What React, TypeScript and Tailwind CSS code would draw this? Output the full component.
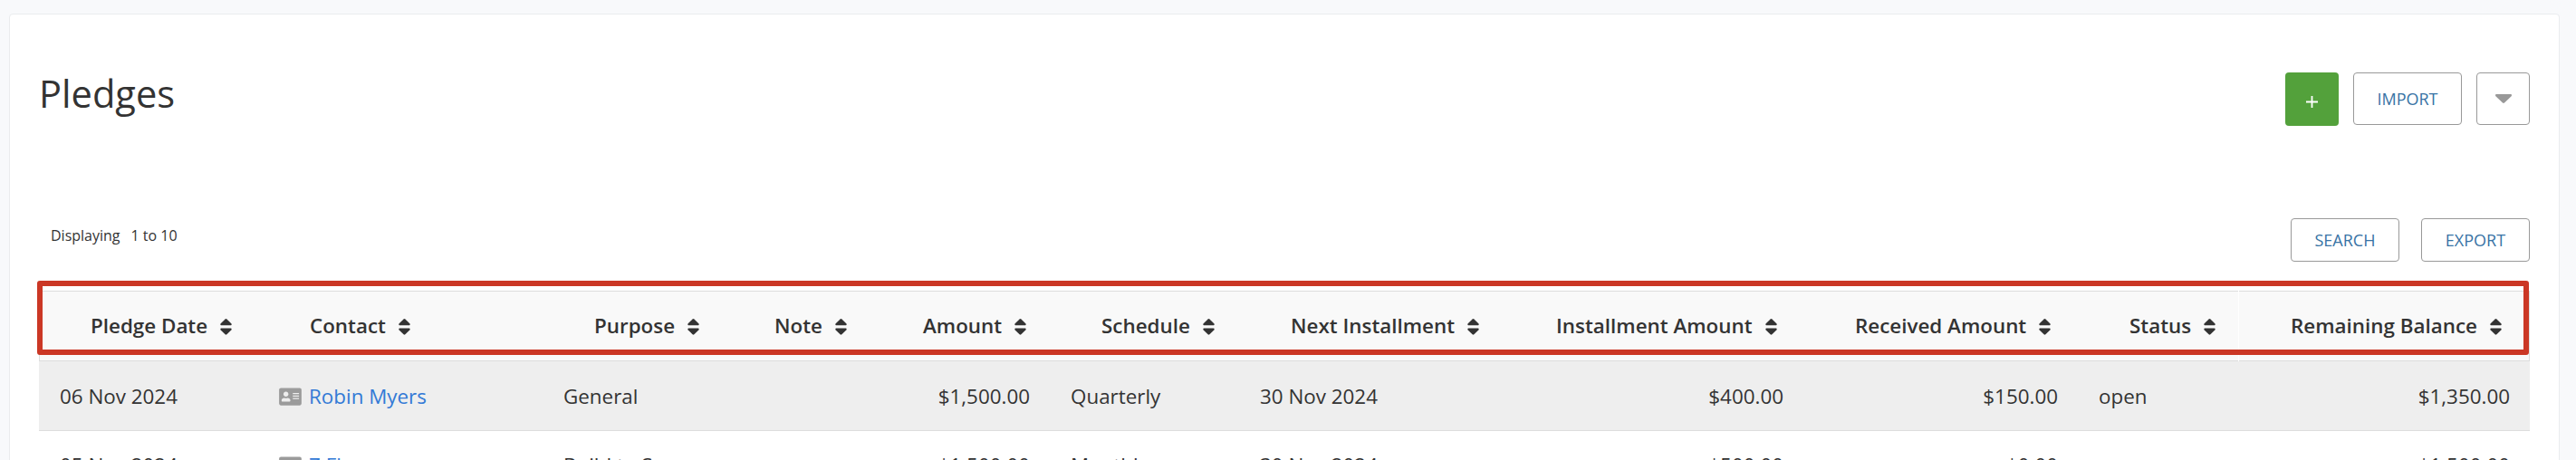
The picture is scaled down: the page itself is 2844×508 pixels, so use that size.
import React from "react";
import clsx from "clsx";
import { FaAddressCard } from "react-icons/fa";

interface Pledge {
  date: string;
  contact: string;
  purpose: string;
  note: string;
  amount: string;
  schedule: string;
  next: string;
  installment: string;
  received: string;
  status: string;
  balance: string;
}

const columns = [
  "Pledge Date",
  "Contact",
  "Purpose",
  "Note",
  "Amount",
  "Schedule",
  "Next Installment",
  "Installment Amount",
  "Received Amount",
  "Status",
  "Remaining Balance",
];

const pledges: Pledge[] = [
  {
    date: "06 Nov 2024",
    contact: "Robin Myers",
    purpose: "General",
    note: "",
    amount: "$1,500.00",
    schedule: "Quarterly",
    next: "30 Nov 2024",
    installment: "$400.00",
    received: "$150.00",
    status: "open",
    balance: "$1,350.00",
  },
  {
    date: "05 Nov 2024",
    contact: "Z Flynn",
    purpose: "Build to Serve",
    note: "",
    amount: "$1,500.00",
    schedule: "Monthly",
    next: "30 Nov 2024",
    installment: "$500.00",
    received: "$0.00",
    status: "",
    balance: "$1,500.00",
  },
];

const gridCols =
  "grid grid-cols-[242px_314px_199px_164px_197px_209px_293px_330px_303px_178px_321px]";

const SortIcon = () => (
  <svg className="mt-px ml-[14px] h-[18px] w-[13px] shrink-0" viewBox="0 0 13 18" fill="#333">
    <path d="M5.6.5a1.3 1.3 0 0 1 1.8 0l4.9 4.8c.8.8.3 2-.8 2H1.5c-1.1 0-1.6-1.2-.8-2z" />
    <path d="M5.6 17.2a1.3 1.3 0 0 0 1.8 0l4.900-4.800c.8-.8.3-2-.8-2H1.500c-1.100 0-1.600 1.200-.8 2z" />
  </svg>
);

interface ButtonProps {
  children: React.ReactNode;
  className?: string;
}

const Button: React.FC<ButtonProps> = ({ children, className }) => (
  <button
    className={clsx(
      "flex items-center justify-center rounded-[4px] border border-[#999] bg-white text-[18px] text-[#3873a5]",
      className
    )}
  >
    {children}
  </button>
);

const PledgeRow: React.FC<{ pledge: Pledge; shaded: boolean }> = ({ pledge, shaded }) => (
  <div
    className={clsx(
      gridCols,
      "h-[77px] items-center border-b border-[#ddd] *:pr-[22px] *:pl-[23px]",
      shaded ? "bg-[#eee] pt-[2px]" : "bg-white"
    )}
  >
    <div>{pledge.date}</div>
    <div className="flex items-center">
      <FaAddressCard className="mr-[8px] h-[22px] w-[25px] text-[#9b9b9b]" />
      <a className="text-[#337ad6]">{pledge.contact}</a>
    </div>
    <div>{pledge.purpose}</div>
    <div>{pledge.note}</div>
    <div className="text-right">{pledge.amount}</div>
    <div>{pledge.schedule}</div>
    <div>{pledge.next}</div>
    <div className="text-right">{pledge.installment}</div>
    <div className="text-right">{pledge.received}</div>
    <div>{pledge.status}</div>
    <div className="text-right">{pledge.balance}</div>
  </div>
);

export default function App() {
  return (
    <div className="h-[508px] overflow-hidden bg-[#f8f9fb] pt-[15px] pr-[18px] pl-[10px] font-['Open_Sans',sans-serif] text-[22.4px] text-[#333]">
      <div className="h-[600px] rounded-[4px] border border-[#eaecee] bg-white pt-16 pr-8 pl-8">
        <div className="flex items-start justify-between">
          <h1 className="-mt-[7px] text-[41.6px] leading-[60px]">Pledges</h1>
          <div className="flex gap-4">
            <button className="flex size-[59px] items-center justify-center rounded-[4px] bg-[#53a13b]">
              <svg className="mt-[6px] size-[13px]" viewBox="0 0 13 13" stroke="#fff" strokeWidth="1.8">
                <path d="M6.5 0v13M0 6.5h13" />
              </svg>
            </button>
            <Button className="h-[58px] w-[120px]">IMPORT</Button>
            <Button className="h-[58px] w-[59px]">
              <svg className="h-[10px] w-[18px]" viewBox="0 0 18 10" fill="#999">
                <path d="M1 0h16q1 0 1 1t-.6 1.5L10 9.5q-1 .8-2 0L.6 2.5Q0 2 0 1t1-1z" />
              </svg>
            </Button>
          </div>
        </div>

        <div className="mt-[102px] flex justify-between">
          <div className="flex gap-3 pt-[7px] pl-[13px] text-[16px] leading-6">
            <span>Displaying</span>
            <span>1 to 10</span>
          </div>
          <div className="flex gap-6">
            <Button className="h-12 w-[120px]">SEARCH</Button>
            <Button className="h-12 w-[120px]">EXPORT</Button>
          </div>
        </div>

        <div className="relative mt-8">
          <div className={clsx(gridCols, "h-[78px] bg-[#f9f9f9]")}>
            {columns.map((name) => (
              <div
                key={name}
                className="flex items-center border-y border-[#ddd] pl-[57px] font-semibold whitespace-nowrap first:border-l first:pl-14 last:border-r last:shadow-[-1px_0_0_#fff]"
              >
                {name}
                <SortIcon />
              </div>
            ))}
          </div>
          {pledges.map((pledge, i) => (
            <PledgeRow key={pledge.date} pledge={pledge} shaded={i % 2 === 0} />
          ))}
          {/* highlight around the sortable headers */}
          <div className="pointer-events-none absolute -top-[11px] right-px -left-[2px] h-[82px] rounded-[3px] border-[6px] border-[#cb3725]" />
        </div>
      </div>
    </div>
  );
}
